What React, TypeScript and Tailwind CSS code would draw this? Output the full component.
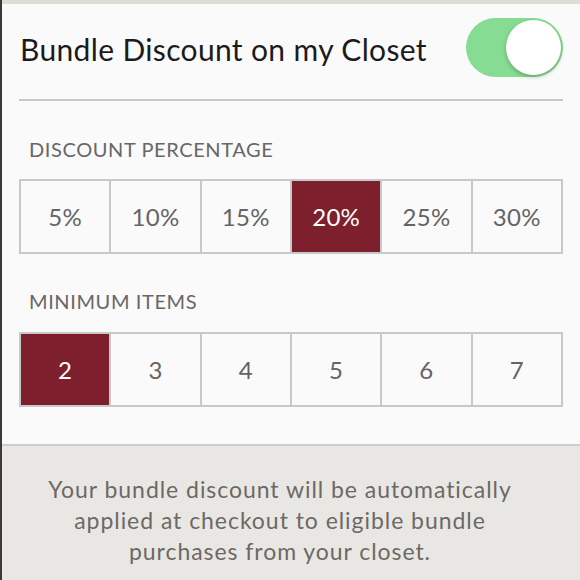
import { useState } from 'react';

const percents = ['5%', '10%', '15%', '20%', '25%', '30%'];
const items = ['2', '3', '4', '5', '6', '7'];

interface SegmentProps {
  options: string[];
  value: string;
  onChange: (v: string) => void;
}

function Segment({ options, value, onChange }: SegmentProps) {
  return (
    <div className="flex h-[75px] border-2 border-[#c9c8c8] bg-[#fbfafb]">
      {options.map((o, i) => (
        <button
          key={o}
          onClick={() => onChange(o)}
          className={
            'flex-1 flex items-center justify-center text-[24px] tracking-[0.3px] ' +
            (i > 0 ? 'border-l-2 border-[#c9c8c8] ' : '') +
            (o === value ? 'bg-[#7e1f2d] text-white' : 'text-[#646464]')
          }
        >
          {o}
        </button>
      ))}
    </div>
  );
}

export default function App() {
  const [on, setOn] = useState(true);
  const [pct, setPct] = useState('20%');
  const [min, setMin] = useState('2');

  return (
    <div
      className="w-[580px] h-[580px] overflow-hidden bg-[#e9e7e3] border-l-2 border-[#3a3a3a] flex flex-col"
      style={{ fontFamily: 'Lato, "Open Sans", sans-serif' }}
    >
      <div className="h-[4px] bg-[#dedcd7]" />
      <div className="bg-[#fbfafb] px-[17px] pb-[37px] border-b-2 border-[#cfcdca]">
        <div className="flex items-center justify-between pt-[14px] pb-[22px]">
          <h1 className="pl-[1px] pt-[3px] text-[30px] tracking-[0.35px] text-[#1b1b1b]">
            Bundle Discount on my Closet
          </h1>
          <button
            onClick={() => setOn(!on)}
            className={
              'w-[97px] h-[59px] rounded-full p-[2px] flex ' +
              (on ? 'bg-[#86dc92] justify-end' : 'bg-[#e5e5e5] justify-start')
            }
          >
            <span className="w-[55px] h-[55px] rounded-full bg-white shadow-[0_2px_4px_rgba(0,0,0,0.25)]" />
          </button>
        </div>
        <div className="h-[2px] bg-[#c8c8c8]" />

        <div className="pt-[36px] pl-[10px] pb-[18px] text-[20px] leading-[24px] tracking-[0.6px] text-[#676767]">
          DISCOUNT PERCENTAGE
        </div>
        <Segment options={percents} value={pct} onChange={setPct} />

        <div className="pt-[35px] pl-[10px] pb-[19px] text-[20px] leading-[24px] tracking-[0.6px] text-[#676767]">
          MINIMUM ITEMS
        </div>
        <Segment options={items} value={min} onChange={setMin} />
      </div>

      <p className="pt-[28px] pl-[10px] pr-[32px] text-center text-[23px] leading-[31px] tracking-[0.95px] text-[#6c6965]">
        Your bundle discount will be automatically
        <br />
        applied at checkout to eligible bundle
        <br />
        purchases from your closet.
      </p>
    </div>
  );
}
